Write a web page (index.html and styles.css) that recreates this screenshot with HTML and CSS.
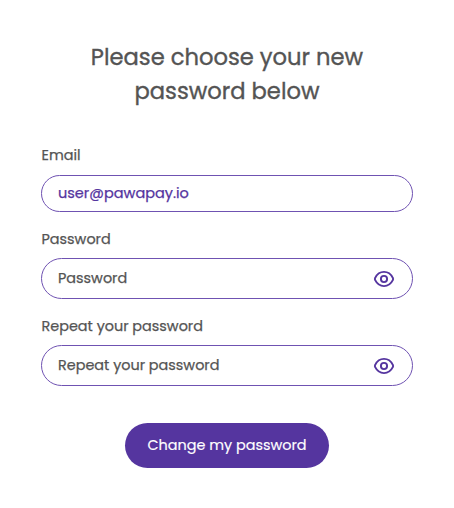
FILE: index.html
```html
<!DOCTYPE html>
<html lang="en">
<head>
<meta charset="utf-8">
<title>Choose password</title>
<link rel="stylesheet" href="styles.css">
</head>
<body>
<form class="card">
  <h1 class="title"><span class="line">Please choose your new</span><span class="line">password below</span></h1>
  <div class="group">
    <div class="label label-first">Email</div>
    <div class="field short"><span class="value">user@pawapay.io</span></div>
  </div>
  <div class="group">
    <div class="label">Password</div>
    <div class="field"><span>Password</span>
      <svg class="eye" viewBox="0 0 22 18"><path d="M2.2 10.2Q1.5 9 2.2 7.8C4 4.2 7 1.9 11 1.9S18 4.2 19.8 7.8Q20.5 9 19.8 10.2C18 13.8 15 16.1 11 16.1S4 13.8 2.2 10.2Z"/><circle cx="11" cy="9" r="3.1"/></svg>
    </div>
  </div>
  <div class="group">
    <div class="label">Repeat your password</div>
    <div class="field"><span>Repeat your password</span>
      <svg class="eye" viewBox="0 0 22 18"><path d="M2.2 10.2Q1.5 9 2.2 7.8C4 4.2 7 1.9 11 1.9S18 4.2 19.8 7.8Q20.5 9 19.8 10.2C18 13.8 15 16.1 11 16.1S4 13.8 2.2 10.2Z"/><circle cx="11" cy="9" r="3.1"/></svg>
    </div>
  </div>
  <button class="submit" type="button">Change my password</button>
</form>
</body>
</html>
```
FILE: styles.css
```css
* { box-sizing: border-box; }
body { margin: 0; background: #fff; color: #545454; font: 400 14.4px/20px Poppins, Inter, sans-serif; -webkit-text-stroke: 0.25px; }
.card { display: flex; flex-direction: column; padding: 41px 41px 0; }
.title { margin: 0 0 37px; font-size: 22.65px; font-weight: 400; line-height: 33.5px; text-align: center; -webkit-text-stroke: 0.35px; }
.line { display: block; }
.group { margin-bottom: 17px; }
.label { height: 20px; margin-bottom: 9px; padding-left: 0.5px; }
.label-first { margin-bottom: 10px; }
.field { display: flex; align-items: center; justify-content: space-between; height: 41px; padding: 0 17px 2px 16px; border: 1px solid #6f52b2; border-radius: 21px; }
.short { height: 37px; }
.value { color: #55359f; font-size: 14.5px; }
.eye { width: 22px; height: 18px; margin-top: 2px; fill: none; stroke: #55359f; stroke-width: 1.9; }
.submit { align-self: center; width: 204px; height: 45px; margin-top: 20px; padding: 0 0 1px; border: 0; border-radius: 23px; background: #55359f; color: #fff; font: inherit; -webkit-text-stroke: 0.15px; }
```
